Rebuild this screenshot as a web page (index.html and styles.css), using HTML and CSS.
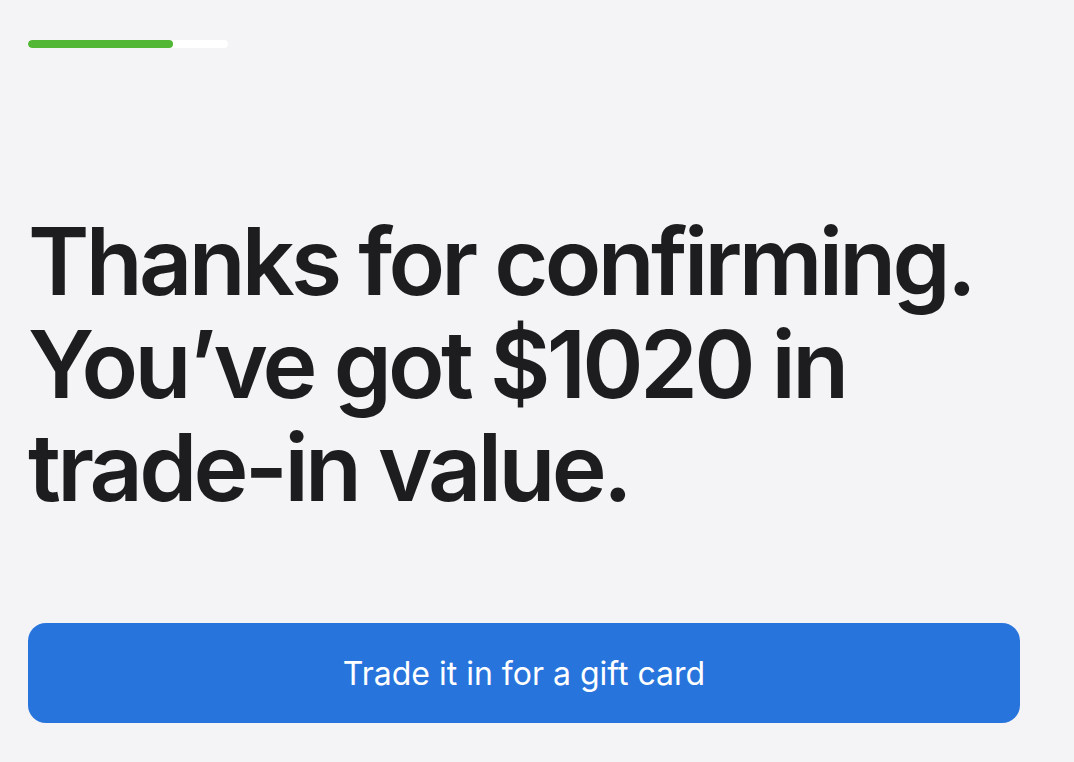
FILE: index.html
```html
<!DOCTYPE html>
<html lang="en">
<head>
  <meta charset="UTF-8" />
  <meta name="viewport" content="width=device-width, initial-scale=1.0" />
  <title>Trade-in confirmed</title>
  <link rel="stylesheet" href="styles.css">
</head>
<body>
  <div class="page">
    <div class="progress-bar">
      <div class="progress-fill" style="width: 72.5%;"></div>
    </div>
    <h1 class="headline">Thanks for confirming.<br>You’ve got $1020 in<br>trade-in value.</h1>
    <button class="primary-btn">Trade it in for a gift card</button>
  </div>
</body>
</html>
```

FILE: styles.css
```css
body {
  margin: 0;
  background: #f4f4f7;
  font-family: Inter, "Noto Sans", sans-serif;
  color: #1d1d1f;
}
.page {
  padding: 40px 54px 0 28px;
  display: flex;
  flex-direction: column;
  align-items: flex-start;
}
.progress-bar {
  width: 200px;
  height: 8px;
  background: #ffffff;
  border-radius: 4px;
  overflow: hidden;
}
.progress-fill {
  height: 100%;
  background: #52b734;
  border-radius: 4px;
}
.headline {
  margin: 162px 0 0 0;
  font-size: 93px;
  font-weight: 600;
  line-height: 103px;
  letter-spacing: -3.7px;
  white-space: nowrap;
}
.primary-btn {
  margin-top: 104px;
  width: 992px;
  height: 100px;
  border: none;
  border-radius: 18px;
  background: #2774dd;
  color: #ffffff;
  font-family: Inter, "Noto Sans", sans-serif;
  font-size: 32px;
  letter-spacing: 0;
  cursor: pointer;
}
```
